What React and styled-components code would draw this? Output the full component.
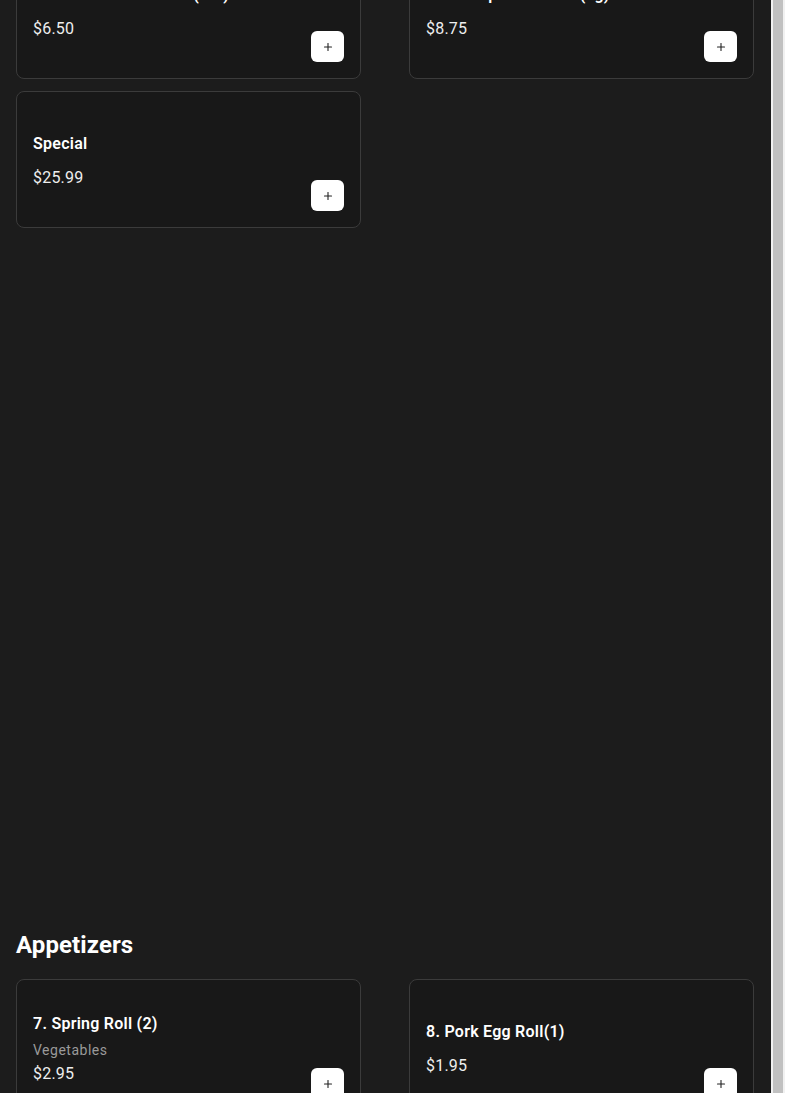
import styled, { createGlobalStyle } from 'styled-components';
import { Plus } from 'lucide-react';

const GlobalStyle = createGlobalStyle`
  html, body {
    margin: 0;
    padding: 0;
    height: 100%;
    overflow: hidden;
    background-color: #1c1c1c;
    font-family: Roboto, "Liberation Sans", sans-serif;
  }
`;

// Page shell
const Shell = styled.div`
  display: flex;
  width: 100%;
  height: 100vh;
  overflow: hidden;
`;

const Main = styled.main`
  flex: 1;
  background-color: #1c1c1c;
  padding: 0 16px;
  margin-top: -110px;
`;

const ScrollTrack = styled.div`
  width: 15px;
  height: 100vh;
  background-color: #f1f1f1;
  padding: 0 2px;
  box-sizing: border-box;
  border-left: 1px solid #1c1c1c;
`;

const ScrollThumb = styled.div`
  width: 100%;
  height: 100%;
  background-color: #c1c1c1;
`;

// Menu sections
const Section = styled.section`
  min-height: ${(p) => p.$minHeight || 'auto'};
`;

const SectionTitle = styled.h2`
  margin: 0 0 16px 0;
  font-size: 24px;
  line-height: 36px;
  font-weight: 700;
  color: #ffffff;
  letter-spacing: 0.1px;
`;

const Grid = styled.div`
  display: grid;
  grid-template-columns: 1fr 1fr;
  column-gap: 48px;
  row-gap: 12px;
`;

// Item cards
const Card = styled.div`
  display: flex;
  justify-content: space-between;
  min-height: 137px;
  box-sizing: border-box;
  padding: 16px;
  background-color: #181818;
  border: 1px solid #3b3b3b;
  border-radius: 8px;
`;

const Info = styled.div`
  display: flex;
  flex-direction: column;
  justify-content: center;
  padding-top: 2px;
`;

const ItemName = styled.div`
  font-size: 16px;
  line-height: 24px;
  font-weight: 600;
  color: #ffffff;
  letter-spacing: 0.25px;
  margin-bottom: 4px;
`;

const ItemDesc = styled.div`
  font-size: 14px;
  line-height: 20px;
  color: #9a9a9a;
  letter-spacing: 0.5px;
  margin-bottom: 2px;
`;

const Price = styled.div`
  font-size: 16px;
  line-height: 24px;
  color: #eeeeee;
  letter-spacing: 0.2px;
  margin-top: ${(p) => (p.$spaced ? '6px' : '0')};
`;

const AddButton = styled.button`
  align-self: flex-end;
  display: flex;
  align-items: center;
  justify-content: center;
  width: 33px;
  height: 31px;
  padding: 0;
  border: none;
  border-radius: 6px;
  background-color: #ffffff;
  color: #222222;
  cursor: pointer;
`;

const sections = [
  {
    title: 'Fried Rice',
    minHeight: '1037px',
    items: [
      { name: '5. Chicken Fried Rice (Sm)', price: '6.50' },
      { name: '6. Shrimp Fried Rice (Lg)', price: '8.75' },
      { name: 'Special', price: '25.99' },
    ],
  },
  {
    title: 'Appetizers',
    items: [
      { name: '7. Spring Roll (2)', desc: 'Vegetables', price: '2.95' },
      { name: '8. Pork Egg Roll(1)', price: '1.95' },
    ],
  },
];

const MenuItem = ({ item }) => (
  <Card>
    <Info>
      <ItemName>{item.name}</ItemName>
      {item.desc && <ItemDesc>{item.desc}</ItemDesc>}
      <Price $spaced={!item.desc}>${item.price}</Price>
    </Info>
    <AddButton aria-label="Add">
      <Plus size={12} strokeWidth={2.2} />
    </AddButton>
  </Card>
);

function App() {
  return (
    <>
      <GlobalStyle />
      <Shell>
        <Main>
          {sections.map((s) => (
            <Section key={s.title} $minHeight={s.minHeight}>
              <SectionTitle>{s.title}</SectionTitle>
              <Grid>
                {s.items.map((item) => (
                  <MenuItem key={item.name} item={item} />
                ))}
              </Grid>
            </Section>
          ))}
        </Main>
        <ScrollTrack>
          <ScrollThumb />
        </ScrollTrack>
      </Shell>
    </>
  );
}

export default App;
